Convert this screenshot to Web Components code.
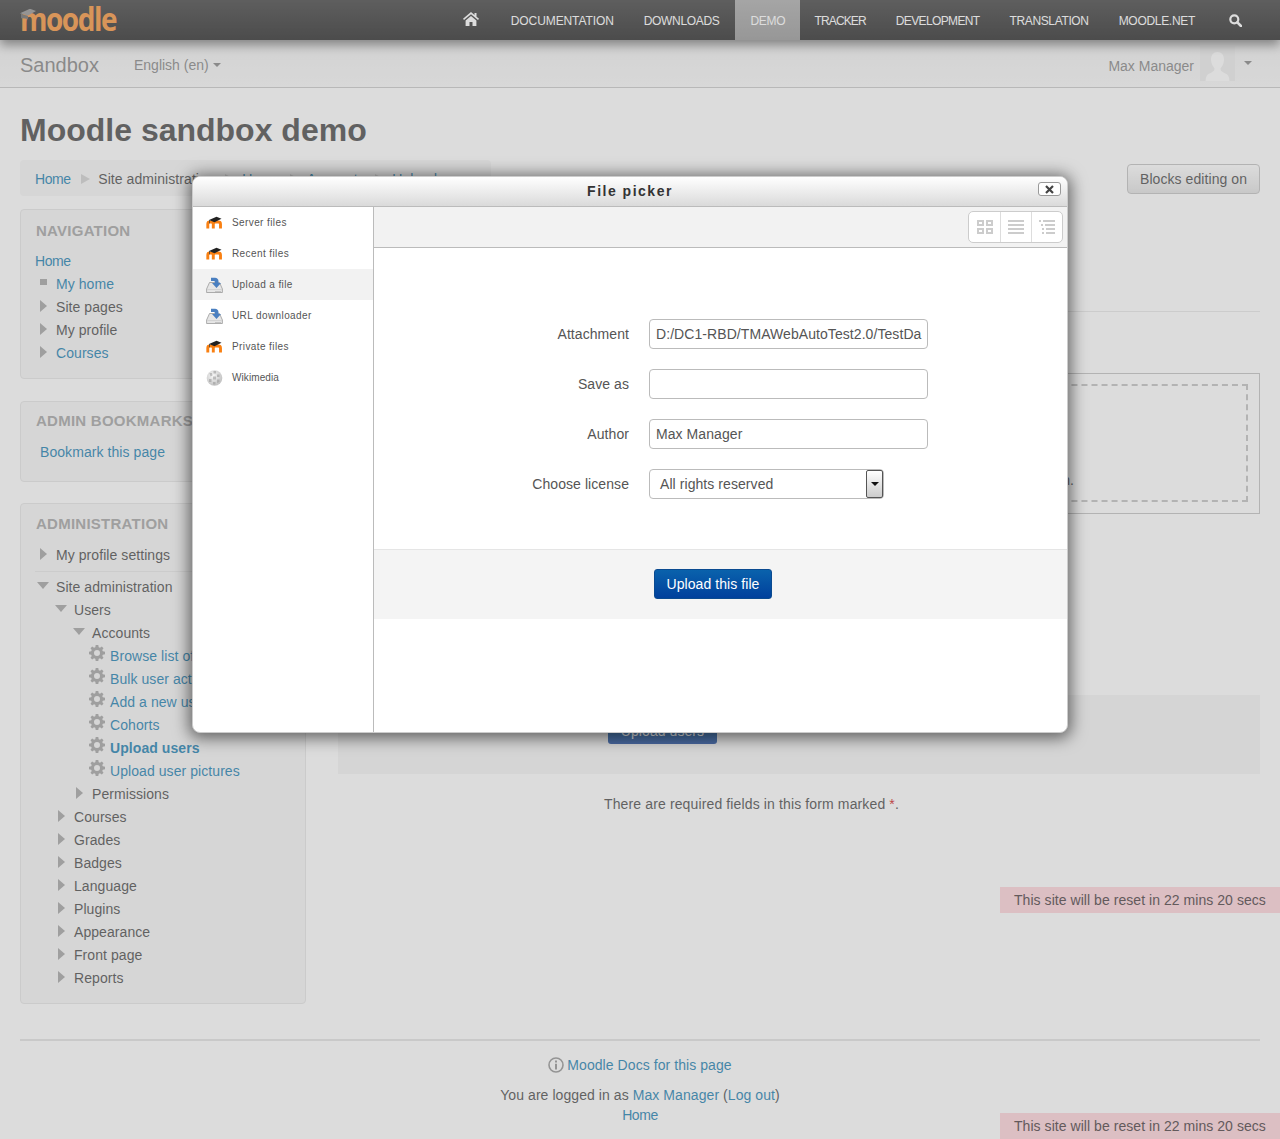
<!DOCTYPE html>
<html lang="en"><head><meta charset="utf-8"><title>Moodle sandbox demo</title>
<style>
html,body{margin:0;padding:0;height:1139px;overflow:hidden}
body{font:14px/20px "Liberation Sans",Arial,sans-serif;letter-spacing:.07px;color:#333;background:#fff;position:relative}
</style></head>
<body>
<moodle-topnav></moodle-topnav>
<moodle-subnav></moodle-subnav>
<moodle-page>
  <moodle-block slot="side" title="Navigation" style="height:170px">
    <tree-row depth="0" kind="none" link style="letter-spacing:-.4px">Home</tree-row>
    <tree-row depth="1" kind="bullet" link>My home</tree-row>
    <tree-row depth="1" kind="closed">Site pages</tree-row>
    <tree-row depth="1" kind="closed">My profile</tree-row>
    <tree-row depth="1" kind="closed" link>Courses</tree-row>
  </moodle-block>
  <moodle-block slot="side" title="Admin bookmarks" style="height:81px;--pt:9px">
    <tree-row depth="0" kind="none" link style="margin:10px 0 0 5px">Bookmark this page</tree-row>
  </moodle-block>
  <moodle-block slot="side" title="Administration" style="height:501px;margin-top:-1px;--pt:10px;--mb:10px">
    <tree-row depth="1" kind="closed">My profile settings</tree-row>
    <div style="height:1px;background:#e5e5e5;margin:4px 0 4px 0"></div>
    <tree-row depth="1" kind="open">Site administration</tree-row>
    <tree-row depth="2" kind="open">Users</tree-row>
    <tree-row depth="3" kind="open">Accounts</tree-row>
    <tree-row depth="4" kind="gear" link>Browse list of users</tree-row>
    <tree-row depth="4" kind="gear" link>Bulk user actions</tree-row>
    <tree-row depth="4" kind="gear" link>Add a new user</tree-row>
    <tree-row depth="4" kind="gear" link>Cohorts</tree-row>
    <tree-row depth="4" kind="gear" link strong>Upload users</tree-row>
    <tree-row depth="4" kind="gear" link>Upload user pictures</tree-row>
    <tree-row depth="3" kind="closed">Permissions</tree-row>
    <tree-row depth="2" kind="closed">Courses</tree-row>
    <tree-row depth="2" kind="closed">Grades</tree-row>
    <tree-row depth="2" kind="closed">Badges</tree-row>
    <tree-row depth="2" kind="closed">Language</tree-row>
    <tree-row depth="2" kind="closed">Plugins</tree-row>
    <tree-row depth="2" kind="closed">Appearance</tree-row>
    <tree-row depth="2" kind="closed">Front page</tree-row>
    <tree-row depth="2" kind="closed">Reports</tree-row>
  </moodle-block>
  <moodle-main slot="main"></moodle-main>
</moodle-page>
<moodle-footer></moodle-footer>
<modal-lightbox></modal-lightbox>
<reset-banner style="top:887px"></reset-banner>
<reset-banner style="top:1113px"></reset-banner>
<file-picker></file-picker>
<script>
const ICONS={
 home:'<svg width="16" height="14" viewBox="0 0 16 14"><path fill="#fff" d="M8 0 0 6.800l1 1.200L8 2.200 15 8l1-1.200-2.500-2.100V1h-2v2L8 0zM2.600 8.400V14h3.900v-4h3v4h3.900V8.400L8 3.900 2.600 8.400z"/></svg>',
 search:'<svg width="13" height="13" viewBox="0 0 13 13"><circle cx="5.300" cy="5.300" r="4" fill="none" stroke="#fff" stroke-width="2.200"/><path d="M8.300 8.300 12 12" stroke="#fff" stroke-width="2.600" stroke-linecap="round"/></svg>',
 moodle:'<svg width="17" height="16" viewBox="0 0 17 16"><path fill="none" stroke="#f98012" stroke-width="2.900" d="M1.800 13.500V9c0-1.200.8-2 2-2h1.500c1.200 0 2 .8 2 2v4.500M7.300 9c0-1.200.8-2 2-2h3c1.500 0 2.200.9 2.200 2v4.500"/><path fill="#222" d="M3 5 10.500 1.800l5 2-7 3.400z"/><path fill="#444" d="M3 5h.8v3.200H3z"/></svg>',
 upload:'<svg width="17" height="16" viewBox="0 0 17 16"><path fill="#e6e6e6" stroke="#9a9a9a" stroke-width=".8" d="M.6 12 3.500 5.500h10L16.400 12v3.500H.6z"/><path fill="#cfcfcf" d="M1.200 12.200h14.600v.9H1.200z"/><path fill="#bbb" d="M9 14h6v.8H9z"/><path fill="#4a7fc0" d="M5 .8h4c2 0 3.500 1.500 3.500 3.500V6H15l-4.500 5L6 6h2.800V5c0-.6-.4-1-1-1H5z"/></svg>',
 wiki:'<svg width="16" height="16" viewBox="0 0 16 16"><defs><radialGradient id="g" cx=".4" cy=".35" r=".8"><stop offset="0" stop-color="#f8f8f8"/><stop offset="1" stop-color="#b5b5b5"/></radialGradient></defs><circle cx="8" cy="8" r="7.800" fill="url(#g)"/><path fill="#8f8f8f" d="M3 3h2.500l.5 2.500L4 6.500zM7 1h2.500v2.500H7zM10.500 4.500H13v2.500h-2.500zM6.500 6.500H9.500v3H6.500zM2.500 9H5v3H2.500zM10.500 9.500H13v2.500l-2.500 1zM6.500 12H9v2.500H6.500z" opacity=".5"/></svg>',
 gear:'<svg width="16" height="16" viewBox="0 0 16 16"><path fill="#999" fill-rule="evenodd" d="M6.700 0h2.600l.4 2.200 1.300.55L12.800 1.500l1.700 1.700-1.250 1.800.55 1.300 2.200.4v2.600l-2.200.4-.55 1.300 1.250 1.800-1.700 1.700-1.800-1.250-1.300.55-.4 2.200H6.700l-.4-2.200-1.300-.55-1.800 1.250-1.700-1.700 1.250-1.800-.55-1.300L0 9.300V6.700l2.200-.4.55-1.300L1.500 3.200l1.700-1.700L5 2.750l1.300-.55zM8 5a3 3 0 1 0 0 6 3 3 0 0 0 0-6z"/></svg>',
 info:'<svg width="16" height="16" viewBox="0 0 16 16"><circle cx="8" cy="8" r="7" fill="none" stroke="#888" stroke-width="1.600"/><path fill="#888" d="M7 3.500h2v2H7zM7 6.800h2v5.700H7z"/></svg>',
 grid:'<svg width="16" height="16" viewBox="0 0 16 16" fill="none" stroke="#ccc" stroke-width="2"><rect x="1" y="2" width="5" height="4"/><rect x="10" y="2" width="5" height="4"/><rect x="1" y="10" width="5" height="4"/><rect x="10" y="10" width="5" height="4"/></svg>',
 list:'<svg width="16" height="16" viewBox="0 0 16 16" fill="#ccc"><path d="M0 1h16v2H0zM0 5h16v2H0zM0 9h16v2H0zM0 13h16v2H0z"/></svg>',
 tree:'<svg width="16" height="16" viewBox="0 0 16 16" fill="#ccc"><path d="M0 1h2v2H0zM4 1h12v2H4zM2 5h2v2H2zM6 5h10v2H6zM3 9h2v2H3zM7 9h9v2H7zM3 13h2v2H3zM7 13h9v2H7z"/></svg>',
 close:'<svg width="9" height="9" viewBox="0 0 9 9"><path d="M1 1l7 7M8 1 1 8" stroke="#444" stroke-width="2.200"/></svg>'
};
function el(name,css,html){
  customElements.define(name,class extends HTMLElement{
    constructor(){super();const r=this.attachShadow({mode:'open'});r.innerHTML=`<style>${css}</style>${typeof html==='function'?html(this):html}`;}
  });
}
el('moodle-topnav',`
:host{display:flex;align-items:center;height:40px;background:linear-gradient(#2e2e2e,#0f0f0f);padding-left:20px;box-shadow:0 5px 10px rgba(0,0,0,.55);position:relative;z-index:2;color:#fff;font-size:12px}
.logo{font:700 28px/32px "Open Sans",sans-serif;color:#f98925;letter-spacing:-1.500px;position:relative;height:32px;transform:scaleY(1.120);transform-origin:50% 80%;white-space:nowrap}
.logo svg{position:absolute;left:0;top:7px}
nav{display:flex;margin-left:auto;height:40px;align-items:center;margin-right:38px}
a{display:flex;align-items:center;height:40px;padding:1px 15px 0;box-sizing:border-box;white-space:nowrap}
a.on{background:linear-gradient(#a4a4a4,#8c8c8c);margin:0 -1px 0 1px}
a.home{padding:0 16px 0 0}a.home svg{margin-top:-2px}
a.s{padding:0 0 0 19px}
`,`<div class="logo"><svg width="16" height="12" viewBox="0 0 16 12"><path fill="#888" d="M0 4 10 0l6 2-8 4z"/><path fill="#5a5a5a" d="M1 4.500 8 6.500v3c-2-1-4-1-7-1z"/></svg>moodle</div>
<nav><a class="home">${ICONS.home}</a><a style="padding-left:16px;letter-spacing:-.1px">DOCUMENTATION</a><a style="letter-spacing:-.33px">DOWNLOADS</a><a class="on" style="letter-spacing:-.25px">DEMO</a><a style="letter-spacing:-.85px">TRACKER</a><a style="letter-spacing:-.64px">DEVELOPMENT</a><a style="letter-spacing:-.36px">TRANSLATION</a><a style="letter-spacing:-.3px">MOODLE.NET</a><a class="s">${ICONS.search}</a></nav>`);
el('moodle-subnav',`
:host{display:flex;align-items:center;height:48px;box-sizing:border-box;border-bottom:1px solid #c4c4c4;background:linear-gradient(#f0f0f0,#f8f8f8);padding:0 28px 0 20px;color:#777;letter-spacing:0}
.b{font-size:20px;margin-right:35px;position:relative;top:1px}
.l{display:flex;align-items:center;gap:4px;position:relative;top:1px}
.r{margin-left:auto;display:flex;align-items:center}
.c{width:0;height:0;border:4px solid transparent;border-top-color:#777;border-bottom:0}
.a{width:35px;height:35px;background:#ececec;margin:0 9px 0 6px;display:block}
.n{position:relative;top:2px}
.r .c{position:relative;top:-1px}
`,`<span class="b">Sandbox</span><span class="l">English ‎(en)‎<i class="c"></i></span>
<div class="r"><span class="n">Max Manager</span><svg class="a" viewBox="0 0 35 35"><rect width="35" height="35" fill="#ececec"/><path fill="#fff" d="M17.500 6c4 0 6.500 3 6.500 7.500S21.500 21 20.500 22.500c0 2.500 1 3 6 5.500 2 1 2.500 3 3 7h-24c.5-4 1-6 3-7 5-2.500 6-3 6-5.500-1-1.500-3.500-4.500-3.500-9S13.500 6 17.500 6z"/></svg><i class="c"></i></div>`);
el('moodle-page',`
:host{display:block;padding:0 20px}
h1{margin:0;font:700 32px/40px "Liberation Sans",sans-serif;letter-spacing:0;color:#333;padding-top:22px;height:50px;box-sizing:content-box}
.top{display:flex;justify-content:space-between;height:49px}
.bc{width:471px;height:36px;box-sizing:border-box;background:#f5f5f5;border-radius:4px;padding:9px 15px 0;display:flex;white-space:nowrap;overflow:hidden}
.bc a{color:#0070a8}
.bc a.h{letter-spacing:-.4px}
.bc i{width:0;height:0;border:5px solid transparent;border-left:9px solid #ccc;border-right:0;margin:5px 8px 0 10.500px}
.btn{width:133px;height:30px;box-sizing:border-box;margin-top:4px;border:1px solid #bbb;border-radius:4px;background:linear-gradient(#fff,#dedede);text-align:center;line-height:28px}
.cols{display:grid;grid-template-columns:286px 922px;column-gap:32px}
.side{display:flex;flex-direction:column;gap:22px}
`,`<h1>Moodle sandbox demo</h1>
<div class="top"><div class="bc"><a class="h">Home</a><i></i><span>Site administration</span><i></i><a>Users</a><i></i><a>Accounts</a><i></i><a>Upload users</a></div><div class="btn">Blocks editing on</div></div>
<div class="cols"><div class="side"><slot name="side"></slot></div><div><slot name="main"></slot></div></div>`);
el('moodle-block',`
:host{display:block;box-sizing:border-box;background:#f5f5f5;border:1px solid #e3e3e3;border-radius:4px;padding:var(--pt,11px) 15px 0 14px}
h2{margin:0 0 var(--mb,9px) 1px;font:700 15px/20px "Liberation Sans",sans-serif;letter-spacing:.25px;color:#999;text-transform:uppercase;white-space:nowrap}
`,h=>`<h2>${h.getAttribute('title')}</h2><slot></slot>`);
customElements.define('tree-row',class extends HTMLElement{
  constructor(){super();
    const d=+this.getAttribute('depth'),k=this.getAttribute('kind');
    const left=[0,21,39,57,75][d];
    const link=this.hasAttribute('link'),strong=this.hasAttribute('strong');
    let ic='';
    if(k==='closed')ic='<i class="t c"></i>';
    if(k==='open')ic='<i class="t o"></i>';
    if(k==='bullet')ic='<i class="t b"></i>';
    if(k==='gear')ic=`<span class="g">${ICONS.gear}</span>`;
    this.attachShadow({mode:'open'}).innerHTML=`<style>
:host{display:block;height:23px;line-height:23px;position:relative;white-space:nowrap;padding-left:${left}px;color:${link?'#0070a8':'#333'};font-weight:${strong?700:400}}
.t{position:absolute;display:block;width:0;height:0}
.c{left:${left-16}px;top:4px;border:6px solid transparent;border-left:7px solid #999;border-right:0}
.o{left:${left-19}px;top:6px;border:6px solid transparent;border-top:7px solid #999;border-bottom:0}
.b{left:${left-16}px;top:6px;width:7px;height:6px;background:#999}
.g{position:absolute;left:${left-21}px;top:0;line-height:0}
</style>${ic}<slot></slot>`;
  }
});
el('moodle-main',`
:host{display:block;height:790px;position:relative}
.rule{height:1px;background:#e5e5e5;margin-top:102px}
.fp{box-sizing:border-box;height:141px;margin:61px 0 0 0;border:1px solid #bbb;padding:10px 11px 11px 10px}
.dz{height:100%;box-sizing:border-box;border:2px dashed #bbb;text-align:right;padding-top:84px;padding-right:172px;white-space:nowrap}
.act{height:79px;background:#f3f3f3;margin-top:181px;box-sizing:border-box;padding:19px 0 0 270px}
.act b{display:block;width:109px;height:30px;box-sizing:border-box;padding-top:7px;text-align:center;border-radius:3px;background:linear-gradient(#0070a8,#0a3c9a);color:#fff;font-weight:400}
.req{text-align:center;margin-top:20px;padding-right:95px;letter-spacing:.13px}
.req em{color:#c00;font-style:normal}
`,`<div class="rule"></div><div class="fp"><div class="dz">to this section.</div></div><div class="act"><b>Upload users</b></div><div class="req">There are required fields in this form marked <em>*</em>.</div>`);
el('moodle-footer',`
:host{position:absolute;left:20px;right:20px;top:1039px;display:block;border-top:2px solid #e0e0e0;text-align:center;color:#333}
a{color:#0070a8}
.d{margin-top:14px;display:flex;justify-content:center;align-items:center;gap:3px}
.l{margin-top:10px}
`,`<div class="d">${ICONS.info}<a>Moodle Docs for this page</a></div><div class="l">You are logged in as <a>Max Manager</a> (<a>Log out</a>)</div><div><a style="letter-spacing:-.4px">Home</a></div>`);
el('modal-lightbox',`:host{position:absolute;inset:0;background:#a8a8a8;opacity:.4;display:block;z-index:5}`,'');
el('reset-banner',`:host{position:absolute;right:0;width:280px;height:26px;box-sizing:border-box;z-index:6;background:#dcbfc3;color:#635a5c;padding:3px 14px;display:block;white-space:nowrap;letter-spacing:.05px}`,'This site will be reset in 22 mins 20 secs');
el('file-picker',`
:host{position:absolute;left:192px;top:176px;width:876px;height:557px;box-sizing:border-box;z-index:7;display:flex;flex-direction:column;background:#fff;border:1px solid #ccc;border-radius:8px;box-shadow:0 2px 16px 3px rgba(0,0,0,.55);font-size:14px;color:#555}
.head{height:30px;flex:none;box-sizing:border-box;background:linear-gradient(#fff,#dadada);border-bottom:1px solid #bbb;border-radius:7px 7px 0 0;display:flex;align-items:center;justify-content:center;position:relative;font-weight:700;letter-spacing:1.500px;color:#333;padding-bottom:2px}
.x{position:absolute;right:6px;top:5px;width:23px;height:14px;box-sizing:border-box;background:#fff;border:1px solid #999;border-radius:3px;display:flex;align-items:center;justify-content:center}
.body{flex:1;display:grid;grid-template-columns:181px 1fr;min-height:0}
.nav{border-right:1px solid #bbb;display:flex;flex-direction:column}
.it{height:31px;display:flex;align-items:center;padding-left:13px;font-size:10px;letter-spacing:.4px;color:#555;gap:9px}
.it.on{background:#f2f2f2}
.it svg{flex:none;width:17px;height:16px}
.right{display:flex;flex-direction:column;min-width:0}
.tb{height:41px;box-sizing:border-box;background:#f2f2f2;border-bottom:1px solid #bbb;display:flex;justify-content:flex-end;align-items:flex-start;padding:4px 4px 0 0}
.views{display:flex;background:#fff;border:1px solid #ccc;border-radius:5px;height:32px;box-sizing:border-box}
.views span{width:31px;box-sizing:border-box;display:flex;align-items:center;justify-content:center;border-left:1px solid #ddd}
.views span:first-child{border-left:0}
form{height:302px;box-sizing:border-box;padding-top:71px;display:grid;grid-template-columns:255px 279px;column-gap:20px;row-gap:20px;grid-auto-rows:30px;align-content:start;border-bottom:1px solid #e5e5e5;margin:0}
label{text-align:right;line-height:30px}
.in{box-sizing:border-box;border:1px solid #bbb;border-radius:4px;padding:0 6px;line-height:28px;white-space:nowrap;color:#555;height:30px}
.sel{width:235px;position:relative;padding-left:10px}
.sel i{position:absolute;right:0;top:0;bottom:0;width:17px;box-sizing:border-box;border:1px solid #555;border-radius:2px;background:linear-gradient(#fff,#ccc);display:flex;align-items:center;justify-content:center}
.sel i::after{content:"";border:4px solid transparent;border-top-color:#111;border-bottom:0}
.foot{height:69px;background:#f4f4f4;display:flex;align-items:center;padding-left:280px;padding-bottom:1px;box-sizing:border-box}
.up{width:118px;height:30px;box-sizing:border-box;border:1px solid #0a4a90;border-radius:3px;background:linear-gradient(#0a62ac,#00409c);color:#fff;text-align:center;line-height:28px}
`,`<div class="head">File picker<span class="x">${ICONS.close}</span></div>
<div class="body"><div class="nav">
<div class="it">${ICONS.moodle}<span>Server files</span></div>
<div class="it">${ICONS.moodle}<span>Recent files</span></div>
<div class="it on">${ICONS.upload}<span>Upload a file</span></div>
<div class="it">${ICONS.upload}<span>URL downloader</span></div>
<div class="it">${ICONS.moodle}<span>Private files</span></div>
<div class="it">${ICONS.wiki}<span style="letter-spacing:.1px">Wikimedia</span></div>
</div><div class="right">
<div class="tb"><div class="views"><span>${ICONS.grid}</span><span>${ICONS.list}</span><span>${ICONS.tree}</span></div></div>
<form>
<label>Attachment</label><div class="in">D:/DC1-RBD/TMAWebAutoTest2.0/TestDa</div>
<label>Save as</label><div class="in"></div>
<label>Author</label><div class="in">Max Manager</div>
<label>Choose license</label><div class="in sel">All rights reserved<i></i></div>
</form>
<div class="foot"><div class="up">Upload this file</div></div>
</div></div>`);
</script>
</body></html>
